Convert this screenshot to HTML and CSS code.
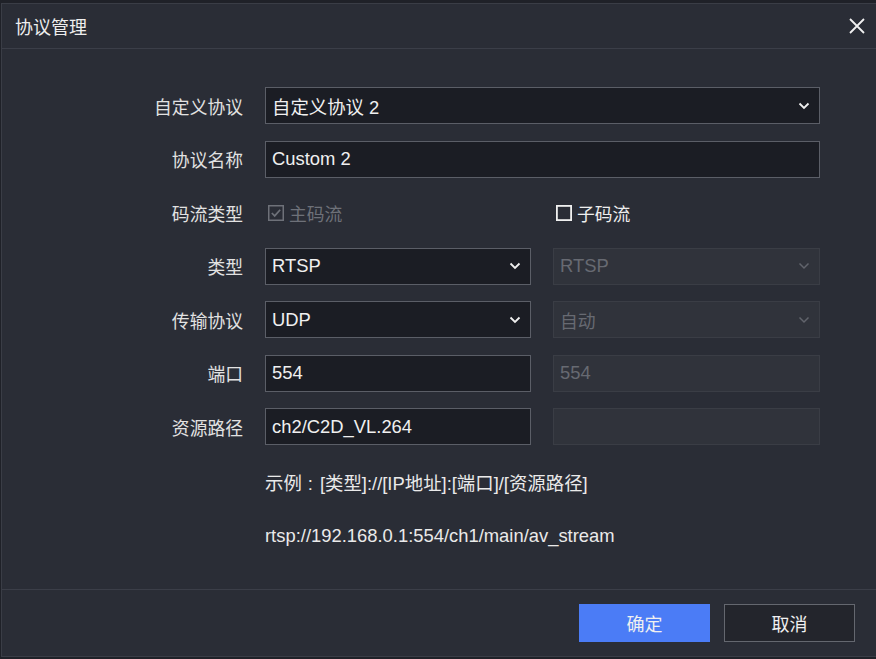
FILE: index.html
```html
<!DOCTYPE html>
<html lang="zh">
<head>
<meta charset="utf-8">
<link rel="stylesheet" href="styles.css">
</head>
<body>
<div class="topstrip"></div>
<div class="dialog">
  <div class="header">
    <span class="title">协议管理</span>
    <svg class="close" width="18" height="18" viewBox="0 0 18 18"><path d="M2 2L16 16M16 2L2 16" stroke="#f0f0f0" stroke-width="1.8" fill="none"/></svg>
  </div>
  <div class="body">
    <div class="form">
      <div class="label">自定义协议</div>
      <div class="field select full"><span>自定义协议 2</span><svg class="chev" width="12" height="8" viewBox="0 0 12 8"><path d="M1.5 1.5L6 6L10.5 1.5" stroke="#f0f0f0" stroke-width="1.8" fill="none"/></svg></div>

      <div class="label">协议名称</div>
      <div class="field full"><span>Custom 2</span></div>

      <div class="label">码流类型</div>
      <div class="check disabled"><span class="box"><svg width="16" height="16" viewBox="0 0 16 16"><rect x="0.75" y="0.75" width="14.5" height="14.5" fill="none" stroke="#6e7179" stroke-width="1.5"/><path d="M3.8 8L6.7 10.9L12.2 4.8" stroke="#6e7179" stroke-width="1.7" fill="none"/></svg></span>主码流</div>
      <div class="check"><span class="box"><svg width="16" height="16" viewBox="0 0 16 16"><rect x="0.9" y="0.9" width="14.2" height="14.2" fill="none" stroke="#f0f0f0" stroke-width="1.8"/></svg></span>子码流</div>

      <div class="label">类型</div>
      <div class="field select"><span>RTSP</span><svg class="chev" width="12" height="8" viewBox="0 0 12 8"><path d="M1.5 1.5L6 6L10.5 1.5" stroke="#f0f0f0" stroke-width="1.8" fill="none"/></svg></div>
      <div class="field select off"><span>RTSP</span><svg class="chev" width="12" height="8" viewBox="0 0 12 8"><path d="M1.5 1.5L6 6L10.5 1.5" stroke="#61646c" stroke-width="1.5" fill="none"/></svg></div>

      <div class="label">传输协议</div>
      <div class="field select"><span>UDP</span><svg class="chev" width="12" height="8" viewBox="0 0 12 8"><path d="M1.5 1.5L6 6L10.5 1.5" stroke="#f0f0f0" stroke-width="1.8" fill="none"/></svg></div>
      <div class="field select off"><span class="cjk">自动</span><svg class="chev" width="12" height="8" viewBox="0 0 12 8"><path d="M1.5 1.5L6 6L10.5 1.5" stroke="#61646c" stroke-width="1.5" fill="none"/></svg></div>

      <div class="label">端口</div>
      <div class="field"><span>554</span></div>
      <div class="field off"><span>554</span></div>

      <div class="label">资源路径</div>
      <div class="field"><span>ch2/C2D_VL.264</span></div>
      <div class="field off"><span></span></div>
    </div>
    <div class="hint">示例<span class="colon">:</span>[类型]://[IP地址]:[端口]/[资源路径]</div>
    <div class="hint url">rtsp://192.168.0.1:554/ch1/main/av_stream</div>
  </div>
  <div class="footer">
    <button class="btn primary">确定</button>
    <button class="btn">取消</button>
  </div>
</div>
</body>
</html>
```

FILE: styles.css
```css
* { box-sizing: border-box; }
html, body {
  margin: 0;
  padding: 0;
  width: 876px;
  height: 659px;
  overflow: hidden;
  background: #1f2128;
  font-family: "Liberation Sans", "Noto Sans CJK SC", sans-serif;
  color: #e8e8e8;
}
.topstrip {
  height: 3px;
  background: #1f2128;
}
.dialog {
  height: 654px;
  margin-left: 1px;
  background: #2a2d36;
  border-left: 1px solid #3a3d46;
  border-top: 1px solid #3a3d46;
  border-bottom: 1px solid #3a3d46;
  display: flex;
  flex-direction: column;
}
.header {
  height: 45px;
  flex: none;
  display: flex;
  align-items: center;
  justify-content: space-between;
  padding: 0 10px 0 13px;
  border-bottom: 1px solid #3b3e48;
}
.title {
  font-family: "Noto Sans CJK SC", sans-serif;
  font-size: 18px;
  color: #eeeeee;
}
.close { display: block; }
.body {
  flex: 1;
  padding-top: 38px;
}
.form {
  display: grid;
  grid-template-columns: 241px 266px 267px;
  column-gap: 22px;
  row-gap: 16.5px;
  grid-auto-rows: 37px;
}
.label {
  grid-column: 1;
  text-align: right;
  align-self: center;
  font-family: "Noto Sans CJK SC", sans-serif;
  font-size: 17.8px;
  color: #e2e2e2;
}
.field {
  display: flex;
  align-items: center;
  justify-content: space-between;
  background: #1b1d24;
  border: 1px solid #5b5e67;
  padding: 0 9px 0 6px;
  font-size: 18.4px;
  color: #f0f0f0;
}
.field.full { grid-column: 2 / span 2; }
.field span { white-space: nowrap; }
.field .cjk { font-family: "Noto Sans CJK SC", sans-serif; font-size: 17.8px; }
.field.off {
  background: #30333b;
  border-color: #3a3d45;
  color: #676a72;
}
.chev { display: block; flex: none; }
.check {
  display: flex;
  align-items: center;
  gap: 5px;
  font-family: "Noto Sans CJK SC", sans-serif;
  font-size: 17.8px;
  color: #eeeeee;
  padding-left: 3px;
}
.check.disabled { color: #6e7179; }
.box { display: flex; }
.check .box svg { display: block; }
.hint {
  margin-left: 263px;
  margin-top: 24px;
  font-size: 18.4px;
  color: #eaeaea;
  height: 25px;
  white-space: nowrap;
}
.colon {
  margin: 0 7px 0 6px;
}
.hint.url { margin-top: 31px; }
.footer {
  flex: none;
  height: 67px;
  border-top: 1px solid #3b3e48;
  display: flex;
  justify-content: flex-end;
  gap: 14px;
  padding: 14px 21px 0 0;
}
.btn {
  width: 131px;
  height: 38px;
  font-family: "Noto Sans CJK SC", sans-serif;
  font-size: 18px;
  color: #f0f0f0;
  background: #23252c;
  border: 1px solid #64676f;
  padding: 0;
}
.btn.primary {
  background: #4b7cf6;
  border-color: #4b7cf6;
}
```
